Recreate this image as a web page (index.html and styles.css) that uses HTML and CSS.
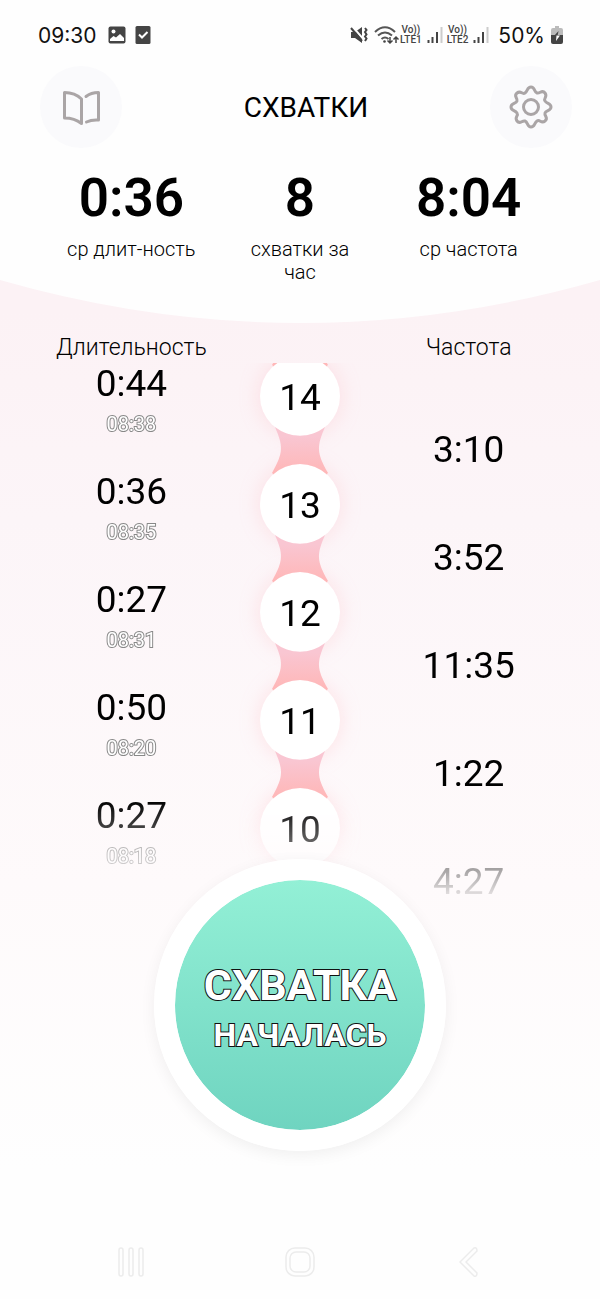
FILE: index.html
```html
<!DOCTYPE html>
<html lang="ru">
<head>
    <meta charset="UTF-8">
    <meta name="viewport" content="width=device-width, initial-scale=1.0">
    <title>Схватки</title>
    <link rel="stylesheet" href="styles.css">
</head>
<body>
    <div class="hero">
        <div class="status-bar">
            <span class="status-text">09:30</span>
            <svg class="status-picture" width="18" height="18" viewBox="0 0 18 18">
                <rect x="0.500" y="0.500" width="17" height="17" rx="2" fill="#444"/>
                <circle cx="5.500" cy="5.500" r="2" fill="#fff"/>
                <path d="M2 15v-2l3.500-3 2.500 1.500 4-3.500 4 4v3z" fill="#fff"/>
            </svg>
            <svg class="status-check" width="16" height="18" viewBox="0 0 16 18">
                <rect x="0.500" width="15" height="18" rx="1.500" fill="#444"/>
                <path d="M4 8.500l3 3 5.500-5.500" fill="none" stroke="#fff" stroke-width="2"/>
            </svg>
            <div class="status-right">
                <svg width="18" height="18" viewBox="0 0 18 18">
                    <path d="M1 6h4l7-5v16l-7-5H1z" fill="#444"/>
                    <path d="M2 0l13 15" stroke="#fefefe" stroke-width="2"/>
                    <path d="M1 2l11 13" stroke="#444" stroke-width="2"/>
                    <path d="M15 2l1.500 2-1.500 2 1.500 2.500-1.500 2 1.500 2-1.500 2.500" fill="none" stroke="#444" stroke-width="2"/>
                </svg>
                <svg class="wifi" width="26" height="20" viewBox="0 0 26 20">
                    <g fill="none" stroke="#555" stroke-width="2">
                        <path d="M1 7Q11-2.500 21 7"/>
                        <path d="M4 10.500q7-6 14 0"/>
                        <path d="M7.500 14q3.500-3 7 0"/>
                    </g>
                    <circle cx="10.500" cy="16.500" r="1.300" fill="#444"/>
                    <path d="M16 12v6m-2.500-2.500l2.500 2.500 2.500-2.500M22 18v-6m-2.500 2.500l2.500-2.500 2.500 2.500" fill="none" stroke="#444" stroke-width="1.500"/>
                </svg>
                <span class="lte">Vo))<br>LTE1</span>
                <svg class="signal" width="16" height="18" viewBox="0 0 16 18">
                    <path d="M1.500 14v3M5.500 11v6M10 6v11" stroke="#444" stroke-width="2"/>
                    <path d="M14.500 1v16" stroke="#ccc" stroke-width="2"/>
                </svg>
                <span class="lte">Vo))<br>LTE2</span>
                <svg class="signal" width="16" height="18" viewBox="0 0 16 18">
                    <path d="M1.500 14v3M5.500 11v6M10 6v11" stroke="#444" stroke-width="2"/>
                    <path d="M14.500 1v16" stroke="#ccc" stroke-width="2"/>
                </svg>
                <span class="status-text">50%</span>
                <svg class="battery" width="12" height="18" viewBox="0 0 12 18">
                    <path d="M4 0h4v2h2q2 0 2 2v6H0V4q0-2 2-2h2z" fill="#bbb"/>
                    <path d="M0 9h12v7q0 2-2 2H2q-2 0-2-2z" fill="#444"/>
                    <path d="M7.500 5L3 10h3.500z" fill="#444"/>
                    <path d="M5 15l4-5.500H5.500z" fill="#fff"/>
                </svg>
            </div>
        </div>

        <header class="header">
            <button class="icon-button" aria-label="Журнал">
                <svg width="42" height="42" viewBox="0 0 42 42" fill="none" stroke="#aaa5a6" stroke-width="3" stroke-linecap="round" stroke-linejoin="round">
                    <path d="M21.500 37.500V13Q15 6.500 4.500 6.500V32q10 0 17 5.500"/>
                    <path d="M26 10.500q5-4 12.500-4V34q-7-0.500-12 2"/>
                </svg>
            </button>
            <h1>СХВАТКИ</h1>
            <button class="icon-button" aria-label="Настройки">
                <svg width="48" height="48" viewBox="0 0 48 48" fill="none" stroke="#aaa5a6" stroke-width="3" stroke-linejoin="round">
                    <circle cx="24" cy="24" r="7.500"/>
                    <path d="M24 4C28 4 27 9 30 10S35 6 38 10S36 15 38 18S44 20 44 24S39 27 38 30S42 35 38 38S33 36 30 38S28 44 24 44S21 39 18 38S13 42 10 38S12 33 10 30S4 28 4 24S9 21 10 18S6 13 10 10S15 12 18 10S20 4 24 4Z"/>
                </svg>
            </button>
        </header>

        <dl class="stats">
            <div class="stat">
                <dd>0:36</dd>
                <dt>ср длит-ность</dt>
            </div>
            <div class="stat">
                <dd>8</dd>
                <dt>схватки за час</dt>
            </div>
            <div class="stat">
                <dd>8:04</dd>
                <dt>ср частота</dt>
            </div>
        </dl>
    </div>
    <svg class="curve" viewBox="0 0 600 43" preserveAspectRatio="none">
        <path d="M0 0Q300 86 600 0z" fill="#fefefe"/>
    </svg>

    <!-- shared shape between two numbered circles -->
    <svg class="defs" width="0" height="0">
        <defs>
            <linearGradient id="pink" x1="0" y1="0" x2="0" y2="1">
                <stop offset="0.2" stop-color="#f9c6d2"/>
                <stop offset="1" stop-color="#ffb6b6"/>
            </linearGradient>
            <symbol id="link" viewBox="0 0 56 54">
                <path d="M3 5A40 40 0 0 0 53 5C45 24 44 30 56 51Q55 51 55 52.500A40 40 0 0 0 1 52.500Q1 51 0 51C12 30 11 24 3 5z" fill="url(#pink)"/>
            </symbol>
        </defs>
    </svg>

    <main>
        <table class="history">
            <thead>
                <tr>
                    <th>Длительность</th>
                    <td></td>
                    <th>Частота</th>
                </tr>
            </thead>
            <tbody>
                <tr>
                    <td class="duration">0:44 <time>08:38</time></td>
                    <td class="node">
                        <svg class="link link-prev"><use href="#link"/></svg>
                        <span class="number">14</span>
                        <svg class="link"><use href="#link"/></svg>
                    </td>
                    <td class="interval">3:10</td>
                </tr>
                <tr>
                    <td class="duration">0:36 <time>08:35</time></td>
                    <td class="node">
                        <span class="number">13</span>
                        <svg class="link"><use href="#link"/></svg>
                    </td>
                    <td class="interval">3:52</td>
                </tr>
                <tr>
                    <td class="duration">0:27 <time>08:31</time></td>
                    <td class="node">
                        <span class="number">12</span>
                        <svg class="link"><use href="#link"/></svg>
                    </td>
                    <td class="interval">11:35</td>
                </tr>
                <tr>
                    <td class="duration">0:50 <time>08:20</time></td>
                    <td class="node">
                        <span class="number">11</span>
                        <svg class="link"><use href="#link"/></svg>
                    </td>
                    <td class="interval">1:22</td>
                </tr>
                <tr>
                    <td class="duration">0:27 <time>08:18</time></td>
                    <td class="node">
                        <span class="number">10</span>
                    </td>
                    <td class="interval">4:27</td>
                </tr>
            </tbody>
        </table>

        <button class="start-button">
            <span class="start-title">СХВАТКА</span>
            <span class="start-subtitle">НАЧАЛАСЬ</span>
        </button>
    </main>

    <nav class="nav-bar">
        <button aria-label="Недавние">
            <svg width="30" height="30" viewBox="0 0 30 30" fill="none" stroke="#ececec" stroke-width="1.500">
                <rect x="3" y="1" width="4" height="28" rx="2"/>
                <rect x="13" y="1" width="4" height="28" rx="2"/>
                <rect x="23" y="1" width="4" height="28" rx="2"/>
            </svg>
        </button>
        <button aria-label="Домой">
            <svg width="30" height="30" viewBox="0 0 30 30" fill="none" stroke="#ececec" stroke-width="1.500">
                <rect x="1" y="1" width="28" height="28" rx="9"/>
                <rect x="5" y="5" width="20" height="20" rx="6"/>
            </svg>
        </button>
        <button aria-label="Назад">
            <svg width="30" height="30" viewBox="0 0 30 30" fill="none" stroke="#ececec" stroke-width="1.500" stroke-linejoin="round">
                <path d="M6 15L20 1Q23 0 23 4L12 15L23 26Q23 30 20 29Z"/>
            </svg>
        </button>
    </nav>
</body>
</html>
```

FILE: styles.css
```css
* {
    box-sizing: border-box;
}
body {
    margin: 0;
    min-height: 100vh;
    display: flex;
    flex-direction: column;
    font-family: Roboto, "Liberation Sans", sans-serif;
    color: #000;
    background: linear-gradient(#fcf2f5 24%, #fcf5f8 40%, #fefafb 68%, #fefefe 90%);
}
svg {
    display: block;
    flex: none;
}
button {
    padding: 0;
    border: none;
    background: none;
    font-family: inherit;
    cursor: pointer;
}
.hero {
    background: #fefefe;
    height: 280px;
}
.status-bar {
    display: flex;
    align-items: center;
    height: 66px;
    padding: 4px 37px 0 38px;
}
.status-text {
    font-family: Inter, sans-serif;
    font-size: 21px;
    color: #111;
}
.status-picture {
    margin-left: 11px;
}
.status-check {
    margin-left: 9px;
}
.status-right {
    display: flex;
    align-items: center;
    margin-left: auto;
}
.wifi {
    margin-left: 6px;
}
.lte {
    font-size: 10px;
    line-height: 10px;
    font-weight: 500;
    text-align: center;
    color: #444;
}
.signal {
    margin: 0 4px 0 5px;
}
.signal + .status-text {
    margin-left: 5px;
}
.battery {
    margin-left: 6px;
}
.header {
    display: flex;
    align-items: center;
    justify-content: space-between;
    padding: 0 28px 0 40px;
}
.header h1 {
    margin: 0;
    padding-top: 2px;
    font-size: 28px;
    line-height: 32px;
    font-weight: 400;
}
.icon-button {
    display: flex;
    align-items: center;
    justify-content: center;
    width: 82px;
    height: 82px;
    border-radius: 50%;
    background: #fafafc;
}
.stats {
    display: grid;
    grid-template-columns: repeat(3, 1fr);
    margin: 0;
    padding: 20px 47px 0;
    text-align: center;
}
.stat {
    display: flex;
    flex-direction: column;
    align-items: center;
}
.stat dd {
    margin: 0 0 10px;
    font-size: 53px;
    line-height: 60px;
    font-weight: 600;
}
.stat dt {
    max-width: 130px;
    font-size: 20px;
    line-height: 23px;
    font-weight: 300;
}
.curve {
    width: 100%;
    height: 43px;
}
.defs {
    position: absolute;
}
main {
    display: flex;
    flex-direction: column;
    align-items: center;
}
.history {
    display: block;
    width: 100%;
    text-align: center;
}
.history thead,
.history tbody {
    display: block;
    padding: 0 47px;
}
.history tr {
    display: grid;
    grid-template-columns: repeat(3, 1fr);
}
.history th,
.history td {
    padding: 0;
}
.history thead tr {
    height: 40px;
    align-items: center;
}
.history th {
    font-size: 23px;
    line-height: 50px;
    font-weight: 300;
}
.history tbody {
    height: 533px;
    overflow: hidden;
    -webkit-mask-image: linear-gradient(#000 82%, transparent 102%);
    mask-image: linear-gradient(#000 82%, transparent 102%);
}
.history tbody tr {
    height: 108px;
}
.history tbody tr:first-child {
    margin-top: -7px;
}
.duration {
    font-size: 37px;
    line-height: 56px;
}
.duration time {
    display: block;
    font-size: 20px;
    line-height: 24px;
    color: #fff;
    -webkit-text-stroke: 2px #888;
    paint-order: stroke fill;
}
.node {
    position: relative;
    display: flex;
    flex-direction: column;
    align-items: center;
}
.number {
    position: relative;
    z-index: 1;
    width: 80px;
    height: 80px;
    flex: none;
    border-radius: 50%;
    background: #fff;
    box-shadow: 0 0 20px rgba(255, 180, 190, 0.35);
    font-size: 37px;
    line-height: 84px;
}
.link {
    position: relative;
    z-index: 2;
    width: 56px;
    height: 54px;
    flex: none;
    margin: -14px 0 -12px;
}
.link-prev {
    position: absolute;
    top: -42px;
    margin: 0;
}
.interval {
    align-self: end;
    font-size: 37px;
    line-height: 28px;
}
.start-button {
    position: relative;
    z-index: 1;
    display: flex;
    flex-direction: column;
    align-items: center;
    justify-content: center;
    width: 292px;
    height: 292px;
    margin-top: -37px;
    padding-top: 8px;
    border: 21px solid #fff;
    border-radius: 50%;
    background: linear-gradient(#93f0d6, #6fd4c0) padding-box;
    box-shadow: 0 4px 16px rgba(0, 0, 0, 0.06);
    font-weight: 700;
    color: #fff;
    -webkit-text-stroke: 2px #111;
    paint-order: stroke fill;
}
.start-title {
    font-size: 43px;
    line-height: 52px;
}
.start-subtitle {
    font-size: 32px;
    line-height: 48px;
}
.nav-bar {
    display: grid;
    grid-template-columns: repeat(3, 1fr);
    justify-items: center;
    margin-top: auto;
    padding: 0 47px 22px;
}
```
